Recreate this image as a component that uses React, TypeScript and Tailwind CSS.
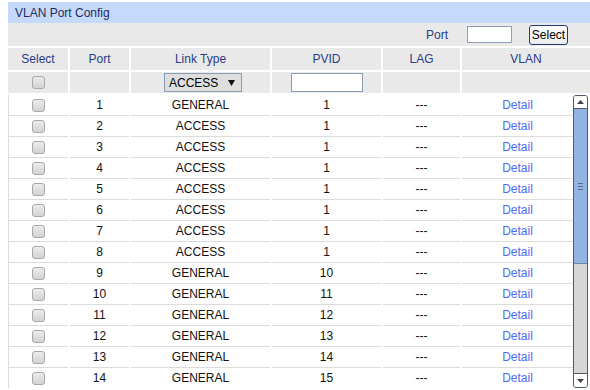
import React from 'react';

type PortRow = {
  port: number;
  linkType: string;
  pvid: number;
};

const rows: PortRow[] = Array.from({ length: 14 }, (_, i) => {
  const port = i + 1;
  if (port === 1) return { port, linkType: 'GENERAL', pvid: 1 };
  if (port <= 8) return { port, linkType: 'ACCESS', pvid: 1 };
  return { port, linkType: 'GENERAL', pvid: port + 1 };
});

const cols = "grid grid-cols-[60px_59px_139px_109px_77px_1fr] gap-x-[2px]";
const dataCols = "grid grid-cols-[59px_59px_139px_109px_77px_1fr] gap-x-[2px]";

function Checkbox() {
  return (
    <div className="w-[13px] h-[13px] rounded-[3px] border border-[#a8a8a8] bg-linear-to-b from-[#ececec] to-[#d3d3d3]" />
  );
}

function Scrollbar() {
  return (
    <div className="w-[15px] h-[293px] flex flex-col border border-[#4f5a6b] rounded-[3px] overflow-hidden bg-[#d6d6d6]">
      {/* up arrow */}
      <div className="h-[13px] bg-white border-b border-[#4f5a6b] flex items-center justify-center">
        <svg width="7" height="4" viewBox="0 0 7 4">
          <polygon points="0,4 7,4 3.5,0" fill="#3b4250" />
        </svg>
      </div>
      {/* thumb */}
      <div className="h-[155px] bg-[#93b4e2] border-b border-[#6d86a8] flex items-center justify-center">
        <div className="flex flex-col gap-[2px]">
          <div className="w-[5px] h-px bg-[#5b6c85]" />
          <div className="w-[5px] h-px bg-[#5b6c85]" />
          <div className="w-[5px] h-px bg-[#5b6c85]" />
        </div>
      </div>
      <div className="flex-1" />
      {/* down arrow */}
      <div className="h-[14px] bg-white border-t border-[#4f5a6b] flex items-center justify-center">
        <svg width="7" height="4" viewBox="0 0 7 4">
          <polygon points="0,0 7,0 3.5,4" fill="#3b4250" />
        </svg>
      </div>
    </div>
  );
}

export default function App() {
  return (
    <div className="w-[590px] h-[390px] overflow-hidden bg-white pl-2 pt-[2px] font-['Liberation_Sans',Arial,sans-serif] text-[12px] text-[#111]">
      {/* Title */}
      <div className="h-[21px] bg-[#c5d9fa] flex items-center px-[7px] text-[#1d2d5e]">
        VLAN Port Config
      </div>

      {/* Toolbar */}
      <div className="h-[23px] bg-[#e9e9e9] flex items-center justify-end pr-[22px]">
        <span className="text-[#2a3c86] mr-[19px]">Port</span>
        <div className="w-[45px] h-[17px] bg-white border border-[#8d9fb8] mr-[17px]" />
        <button className="w-[39px] h-[20px] border border-[#243d6e] rounded-[3px] bg-linear-to-b from-white to-[#ececec] text-[12px] text-black leading-none">
          Select
        </button>
      </div>

      {/* Header */}
      <div className={`${cols} mt-[2px]`}>
        {['Select', 'Port', 'Link Type', 'PVID', 'LAG', 'VLAN'].map((h) => (
          <div key={h} className="h-[22px] bg-[#e9e9e9] flex items-center justify-center text-[#2a3c86]">
            {h}
          </div>
        ))}
      </div>

      {/* Filter row */}
      <div className={`${cols} mt-[2px]`}>
        <div className="h-[21px] bg-[#e9e9e9] flex items-center justify-center">
          <Checkbox />
        </div>
        <div className="h-[21px] bg-[#e9e9e9]" />
        <div className="h-[21px] bg-[#e9e9e9] flex items-center justify-center pl-[5px]">
          <div className="w-[78px] h-[19px] bg-[#dedede] border border-[#8a9cb3] flex items-center justify-between pl-[4px] pr-[6px] text-black">
            <span>ACCESS</span>
            <svg width="7" height="6" viewBox="0 0 7 6">
              <polygon points="0,0 7,0 3.5,6" fill="#111" />
            </svg>
          </div>
        </div>
        <div className="h-[21px] bg-[#e9e9e9] flex items-center justify-center">
          <div className="w-[72px] h-[19px] bg-white border border-[#8a9cb3]" />
        </div>
        <div className="h-[21px] bg-[#e9e9e9]" />
        <div className="h-[21px] bg-[#e9e9e9]" />
      </div>

      {/* Data area */}
      <div className="flex mt-[2px]">
        <div className="w-[565px] h-[293px] overflow-hidden border-l border-[#dcdcdc]">
          {rows.map((r) => (
            <div key={r.port} className={dataCols}>
              <div className="h-[21px] border-b border-[#dcdcdc] flex items-center justify-center">
                <Checkbox />
              </div>
              <div className="h-[21px] border-b border-[#dcdcdc] flex items-center justify-center">{r.port}</div>
              <div className="h-[21px] border-b border-[#dcdcdc] flex items-center justify-center">{r.linkType}</div>
              <div className="h-[21px] border-b border-[#dcdcdc] flex items-center justify-center">{r.pvid}</div>
              <div className="h-[21px] border-b border-[#dcdcdc] flex items-center justify-center">---</div>
              <div className="h-[21px] border-b border-[#dcdcdc] flex items-center justify-center">
                <a className="text-[#4d6cf2] cursor-pointer">Detail</a>
              </div>
            </div>
          ))}
        </div>
        <Scrollbar />
      </div>
    </div>
  );
}
